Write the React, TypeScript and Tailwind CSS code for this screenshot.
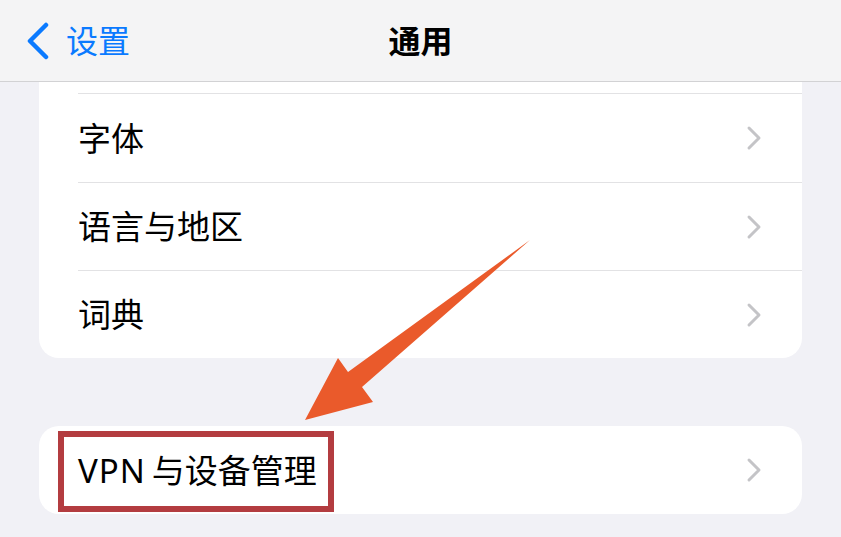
import React from "react";

const font = { fontFamily: '"Noto Sans", "Noto Sans CJK SC", sans-serif' };

function Chevron() {
  return (
    <svg width="16" height="26" viewBox="0 0 16 26" fill="none" className="shrink-0">
      <path d="M3 3 L13 13 L3 23" stroke="#c4c4c7" strokeWidth="3" strokeLinecap="round" strokeLinejoin="round" />
    </svg>
  );
}

function Row({ label, first }: { label: React.ReactNode; first?: boolean }) {
  return (
    <div className="h-[88px] flex items-center pl-[39px]">
      <div className={`h-full flex-1 flex items-center justify-between pr-[40px] ${first ? "" : "border-t border-[#e2e2e4]"}`}>
        <span className="text-[33px] text-black leading-none">{label}</span>
        <Chevron />
      </div>
    </div>
  );
}

export default function App() {
  return (
    <div className="relative w-[841px] h-[537px] overflow-hidden bg-[#f1f1f6]" style={font}>
      {/* Nav bar */}
      <header className="h-[82px] bg-[#f4f4f5] border-b border-[#d2d2d4] flex items-center relative">
        <div className="flex items-center pl-[26px] gap-[16px] text-[#0a7aff]">
          <svg width="24" height="38" viewBox="0 0 24 38" fill="none">
            <path d="M20 3 L4 19 L20 35" stroke="#0a7aff" strokeWidth="4.5" strokeLinecap="round" strokeLinejoin="round" />
          </svg>
          <span className="text-[32px] leading-none">设置</span>
        </div>
        <span className="absolute left-1/2 -translate-x-1/2 text-[32px] font-bold text-black leading-none">通用</span>
      </header>

      <main className="px-[39px]">
        <div className="bg-white rounded-b-[20px]">
          <div className="h-[11px]" />
          <div className="pl-[39px]">
            <div className="border-t border-[#e2e2e4]" />
          </div>
          <Row label="字体" first />
          <Row label="语言与地区" />
          <Row label="词典" />
        </div>

        <div className="mt-[68px] bg-white rounded-[20px] relative">
          <Row
            label={
              <>
                <span className="tracking-[1px] mr-[6px]">VPN</span>与设备管理
              </>
            }
            first
          />
          <div className="absolute left-[19px] top-[5px] w-[276px] h-[81px] border-[6px] border-[#b33c40]" />
        </div>
      </main>

      {/* annotation arrow */}
      <svg className="absolute inset-0 pointer-events-none" width="841" height="537" viewBox="0 0 841 537">
        <polygon
          points="530,240 362,387 373,402 305,420 338,358 348,372"
          fill="#ea5a2b"
        />
      </svg>
    </div>
  );
}
